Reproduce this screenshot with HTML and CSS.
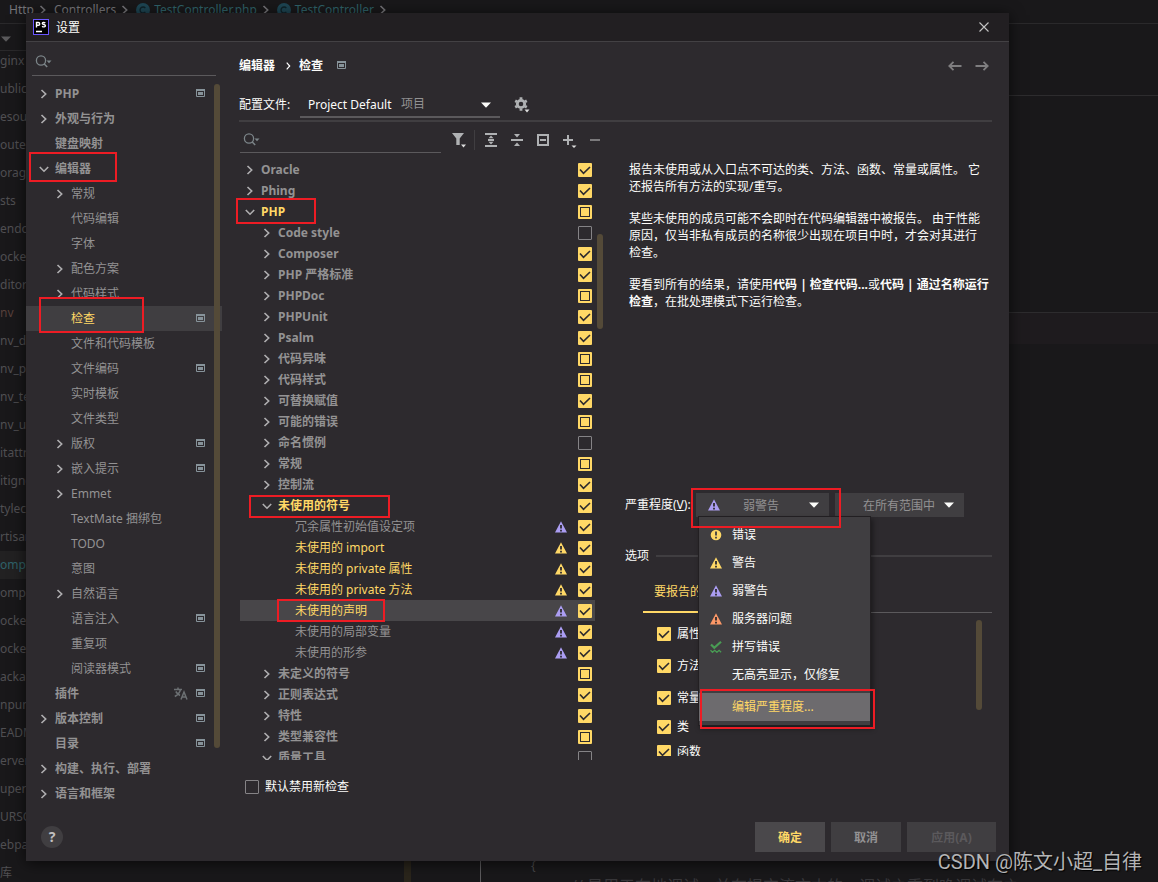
FILE: index.html
```html
<!DOCTYPE html>
<html lang="zh-CN">
<head>
<meta charset="utf-8">
<title>设置</title>
<link rel="stylesheet" href="styles.css">
</head>
<body>
<svg class="defs" aria-hidden="true">
  <symbol id="right" viewBox="0 0 10 10"><path d="M2.5 1 6.7 5 2.5 9" fill="none" stroke="currentColor" stroke-width="1.6"/></symbol>
  <symbol id="down" viewBox="0 0 10 10"><path d="M.8 3 5 7.2 9.2 3" fill="none" stroke="currentColor" stroke-width="1.6"/></symbol>
  <symbol id="proj" viewBox="0 0 9 9"><path d="M.5.5h8v7h-8z" fill="none" stroke="#87939a"/><path d="M0 0h9v2H0zM2 3h5v3H2z" fill="#87939a"/></symbol>
  <symbol id="tri" viewBox="0 0 12 12"><path d="M6 .3 12 11.5H0z" fill="currentColor"/><path d="M5.1 4h1.8v3.6H5.1zM5.1 8.7h1.8v1.7H5.1z" fill="#2d2a2e"/></symbol>
  <symbol id="find" viewBox="0 0 18 14"><circle cx="6" cy="5.5" r="4.6" fill="none" stroke="#7c8589" stroke-width="1.3"/><path d="m9.2 9 3 3" stroke="#7c8589" stroke-width="1.5"/><path d="M11.5 5.5h5L14 8.3z" fill="#7c8589"/></symbol>
  <symbol id="caret" viewBox="0 0 10 6"><path d="M0 .5h10L5 5.7z" fill="currentColor"/></symbol>
  <symbol id="cls" viewBox="0 0 14 14"><circle cx="7" cy="7" r="7" fill="#1e4654"/><path d="M9.3 5A3 3 0 1 0 9.3 9" fill="none" stroke="#0f2229" stroke-width="1.3"/></symbol>
</svg>

<div class="ide">
  <header class="path">
    <span>Http</span><svg class="i10"><use href="#right"/></svg>
    <span>Controllers</span><svg class="i10"><use href="#right"/></svg>
    <svg class="i14"><use href="#cls"/></svg><span class="teal">TestController.php</span><svg class="i10"><use href="#right"/></svg>
    <svg class="i14"><use href="#cls"/></svg><span class="teal">TestController</span><svg class="i10"><use href="#right"/></svg>
  </header>
  <div class="work">
    <aside class="files">
      <div class="files-bar"><svg class="caret"><use href="#caret"/></svg></div>
      <ul>
        <li>ginx</li><li>ublic</li><li>esources</li><li>outes</li><li>orage</li><li>sts</li><li>endor</li><li>ockerignore</li><li>ditorconfig</li><li class="rust">nv</li><li>nv_dev</li><li>nv_prod</li><li>nv_test</li><li>nv_uat</li><li>itattributes</li><li>itignore</li><li>tyleci.yml</li><li>rtisan</li><li class="open">omposer.json</li><li>omposer.lock</li><li>ocker-compose</li><li>ockerfile</li><li>ackage.json</li><li>npunit.xml</li><li>EADME.md</li><li>erver.php</li><li>upervisor</li><li>URSOR</li><li>ebpack.mix.js</li><li>库</li>
      </ul>
    </aside>
    <main class="code">
      <div class="pane tabs-pane"></div>
      <div class="pane code-pane"></div>
      <div class="line-hl"></div>
      <div class="code-tail"><span class="brace">{</span><span class="comment">// 是用于在地调试，并在提交流文本的一调试之重到晚调试在之</span></div>
    </main>
  </div>
</div>

<section class="dialog" role="dialog" aria-labelledby="title">
  <header class="titlebar">
    <svg class="logo" viewBox="0 0 16 16"><rect x=".5" y=".5" width="15" height="15" fill="#000" stroke="#6b57ff"/><path d="M3.5 8.500V3.500h1.800a1.400 1.400 0 0 1 0 2.800H3.500M12.300 4c-1-.9-3-.7-3 .5 0 1.400 3.100.700 3.100 2.200 0 1.500-2.200 1.500-3.300.500M3 12.500h6" fill="none" stroke="#fff" stroke-width="1.400"/></svg>
    <h1 id="title">设置</h1>
    <button class="close" aria-label="关闭"><svg viewBox="0 0 10 10"><path d="m.5.5 9 9m0-9-9 9" stroke="#c4c4c4" stroke-width="1.100"/></svg></button>
  </header>

  <div class="body">
    <nav class="side">
      <label class="search"><svg><use href="#find"/></svg><input type="text" aria-label="搜索设置"></label>
      <ul class="cats">
        <li class="top"><svg class="i10"><use href="#right"/></svg><a href="#">PHP</a><svg class="proj"><use href="#proj"/></svg></li>
        <li class="top"><svg class="i10"><use href="#right"/></svg><a href="#">外观与行为</a></li>
        <li class="top leaf"><a href="#">键盘映射</a></li>
        <li class="top"><svg class="i10"><use href="#down"/></svg><a href="#">编辑器</a><i class="mark m-editor"></i></li>
        <li><svg class="i10"><use href="#right"/></svg><a href="#">常规</a></li>
        <li class="leaf"><a href="#">代码编辑</a></li>
        <li class="leaf"><a href="#">字体</a></li>
        <li><svg class="i10"><use href="#right"/></svg><a href="#">配色方案</a></li>
        <li><svg class="i10"><use href="#right"/></svg><a href="#">代码样式</a></li>
        <li class="leaf current"><a href="#">检查</a><svg class="proj"><use href="#proj"/></svg><i class="mark m-inspect"></i></li>
        <li class="leaf"><a href="#">文件和代码模板</a></li>
        <li class="leaf"><a href="#">文件编码</a><svg class="proj"><use href="#proj"/></svg></li>
        <li class="leaf"><a href="#">实时模板</a></li>
        <li class="leaf"><a href="#">文件类型</a></li>
        <li><svg class="i10"><use href="#right"/></svg><a href="#">版权</a><svg class="proj"><use href="#proj"/></svg></li>
        <li><svg class="i10"><use href="#right"/></svg><a href="#">嵌入提示</a><svg class="proj"><use href="#proj"/></svg></li>
        <li><svg class="i10"><use href="#right"/></svg><a href="#">Emmet</a></li>
        <li class="leaf"><a href="#">TextMate 捆绑包</a></li>
        <li class="leaf"><a href="#">TODO</a></li>
        <li class="leaf"><a href="#">意图</a></li>
        <li><svg class="i10"><use href="#right"/></svg><a href="#">自然语言</a></li>
        <li class="leaf"><a href="#">语言注入</a><svg class="proj"><use href="#proj"/></svg></li>
        <li class="leaf"><a href="#">重复项</a></li>
        <li class="leaf"><a href="#">阅读器模式</a><svg class="proj"><use href="#proj"/></svg></li>
        <li class="top leaf"><a href="#">插件</a><svg class="lang" viewBox="0 0 14 13"><path d="M0 2.500h8M4 .5v2M6.500 2.500C5.800 5.500 3.500 8 .8 9.500M1.800 4.500C3 6.500 4.500 7.700 6 8.500M7 12.500l3-7.500 3 7.500M8 10h4" fill="none" stroke="#6c7073" stroke-width="1.500"/></svg><svg class="proj"><use href="#proj"/></svg></li>
        <li class="top"><svg class="i10"><use href="#right"/></svg><a href="#">版本控制</a><svg class="proj"><use href="#proj"/></svg></li>
        <li class="top leaf"><a href="#">目录</a><svg class="proj"><use href="#proj"/></svg></li>
        <li class="top"><svg class="i10"><use href="#right"/></svg><a href="#">构建、执行、部署</a></li>
        <li class="top"><svg class="i10"><use href="#right"/></svg><a href="#">语言和框架</a></li>
      </ul>
      <span class="thumb side-thumb"></span>
    </nav>

    <div class="main">
      <div class="crumbs">
        <b>编辑器</b><svg class="sep" viewBox="0 0 5 8"><path d="m.7.7 3 3.300-3 3.300" fill="none" stroke="#fff" stroke-width="1.200"/></svg><b>检查</b><svg class="proj"><use href="#proj"/></svg>
        <span class="nav">
          <button aria-label="后退"><svg viewBox="0 0 14 10"><path d="M13.500 5H1.500M5.500.8 1.300 5l4.200 4.200" fill="none" stroke="currentColor" stroke-width="1.800"/></svg></button>
          <button aria-label="前进"><svg viewBox="0 0 14 10"><path d="M.5 5h12M8.500.8 12.700 5 8.500 9.200" fill="none" stroke="currentColor" stroke-width="1.800"/></svg></button>
        </span>
      </div>

      <div class="profile">
        <label for="profile">配置文件:</label>
        <span class="combo">
          <select id="profile"><option>Project Default</option></select>
          <span class="tag">项目</span><svg class="caret"><use href="#caret"/></svg>
        </span>
        <button class="gear" aria-label="配置文件操作"><svg viewBox="0 0 16 16"><g fill="none" stroke="#afb1b3"><circle cx="7" cy="7" r="3.700" stroke-width="2.800"/><path d="M7 .3v2M7 11.700v2M1.200 3.700 3 4.700M11 9.300l1.800 1M1.200 10.300 3 9.300M11 4.700l1.800-1" stroke-width="2.800"/></g><path d="M9 12h7l-3.500 4z" fill="#2d2a2e"/><path d="M10.500 12.500h5L13 15.500z" fill="#ddd"/></svg></button>
      </div>

      <div class="cols">
        <div class="insp">
          <div class="tools">
            <label class="search"><svg><use href="#find"/></svg><input type="text" aria-label="搜索检查"></label>
            <button class="filter" aria-label="筛选"><svg viewBox="0 0 16 16"><path d="M1 1h12L8.700 6.500V13H5.300V6.500z" fill="#afb1b3"/><path d="M10 12.500h5l-2.500 3z" fill="#ddd"/></svg></button>
            <span class="vr"></span>
            <button aria-label="全部展开"><svg viewBox="0 0 16 16"><path d="M2 2h12M2 14h12M5 8h6" stroke="#afb1b3" stroke-width="2"/><path d="M8 3.500 10.500 6.300h-5zM8 12.500l2.500-2.800h-5z" fill="#afb1b3"/></svg></button>
            <button aria-label="全部折叠"><svg viewBox="0 0 16 16"><path d="M2 8h12" stroke="#afb1b3" stroke-width="2"/><path d="M8 5.500 11 2H5zM8 10.500 11 14H5z" fill="#afb1b3"/></svg></button>
            <button aria-label="重置为空"><svg viewBox="0 0 16 16"><path d="M3 3h10v10H3zM5 8h6" fill="none" stroke="#afb1b3" stroke-width="2"/></svg></button>
            <button aria-label="添加"><svg viewBox="0 0 16 16"><path d="M7 3v10M2 8h10" stroke="#afb1b3" stroke-width="2"/><path d="M10.500 13.500h5L13 16z" fill="#ddd"/></svg></button>
            <button aria-label="移除"><svg viewBox="0 0 16 16"><path d="M3 8h10" stroke="#7b7a7c" stroke-width="2"/></svg></button>
          </div>

          <ul class="tree">
            <li class="d0"><svg class="i10"><use href="#right"/></svg><label for="c1">Oracle</label><input type="checkbox" id="c1" checked></li>
            <li class="d0"><svg class="i10"><use href="#right"/></svg><label for="c2">Phing</label><input type="checkbox" id="c2" checked></li>
            <li class="d0 hot"><svg class="i10"><use href="#down"/></svg><label for="c3">PHP</label><input type="checkbox" id="c3" class="mixed"><i class="mark m-php"></i></li>
            <li><svg class="i10"><use href="#right"/></svg><label for="c4">Code style</label><input type="checkbox" id="c4"></li>
            <li><svg class="i10"><use href="#right"/></svg><label for="c5">Composer</label><input type="checkbox" id="c5" checked></li>
            <li><svg class="i10"><use href="#right"/></svg><label for="c6">PHP 严格标准</label><input type="checkbox" id="c6" checked></li>
            <li><svg class="i10"><use href="#right"/></svg><label for="c7">PHPDoc</label><input type="checkbox" id="c7" class="mixed"></li>
            <li><svg class="i10"><use href="#right"/></svg><label for="c8">PHPUnit</label><input type="checkbox" id="c8" checked></li>
            <li><svg class="i10"><use href="#right"/></svg><label for="c9">Psalm</label><input type="checkbox" id="c9" checked></li>
            <li><svg class="i10"><use href="#right"/></svg><label for="c10">代码异味</label><input type="checkbox" id="c10" class="mixed"></li>
            <li><svg class="i10"><use href="#right"/></svg><label for="c11">代码样式</label><input type="checkbox" id="c11" class="mixed"></li>
            <li><svg class="i10"><use href="#right"/></svg><label for="c12">可替换赋值</label><input type="checkbox" id="c12" checked></li>
            <li><svg class="i10"><use href="#right"/></svg><label for="c13">可能的错误</label><input type="checkbox" id="c13" class="mixed"></li>
            <li><svg class="i10"><use href="#right"/></svg><label for="c14">命名惯例</label><input type="checkbox" id="c14"></li>
            <li><svg class="i10"><use href="#right"/></svg><label for="c15">常规</label><input type="checkbox" id="c15" class="mixed"></li>
            <li><svg class="i10"><use href="#right"/></svg><label for="c16">控制流</label><input type="checkbox" id="c16" checked></li>
            <li class="hot"><svg class="i10"><use href="#down"/></svg><label for="c17">未使用的符号</label><input type="checkbox" id="c17" checked><i class="mark m-symbols"></i></li>
            <li class="d2"><label for="c18">冗余属性初始值设定项</label><svg class="sev weak"><use href="#tri"/></svg><input type="checkbox" id="c18" checked></li>
            <li class="d2 hot"><label for="c19">未使用的 import</label><svg class="sev warn"><use href="#tri"/></svg><input type="checkbox" id="c19" checked></li>
            <li class="d2 hot"><label for="c20">未使用的 private 属性</label><svg class="sev warn"><use href="#tri"/></svg><input type="checkbox" id="c20" checked></li>
            <li class="d2 hot"><label for="c21">未使用的 private 方法</label><svg class="sev warn"><use href="#tri"/></svg><input type="checkbox" id="c21" checked></li>
            <li class="d2 hot current"><label for="c22">未使用的声明</label><svg class="sev weak"><use href="#tri"/></svg><input type="checkbox" id="c22" checked><i class="mark m-decl"></i></li>
            <li class="d2"><label for="c23">未使用的局部变量</label><svg class="sev weak"><use href="#tri"/></svg><input type="checkbox" id="c23" checked></li>
            <li class="d2"><label for="c24">未使用的形参</label><svg class="sev weak"><use href="#tri"/></svg><input type="checkbox" id="c24" checked></li>
            <li><svg class="i10"><use href="#right"/></svg><label for="c25">未定义的符号</label><input type="checkbox" id="c25" class="mixed"></li>
            <li><svg class="i10"><use href="#right"/></svg><label for="c26">正则表达式</label><input type="checkbox" id="c26" checked></li>
            <li><svg class="i10"><use href="#right"/></svg><label for="c27">特性</label><input type="checkbox" id="c27" checked></li>
            <li><svg class="i10"><use href="#right"/></svg><label for="c28">类型兼容性</label><input type="checkbox" id="c28" class="mixed"></li>
            <li><svg class="i10"><use href="#down"/></svg><label for="c29">质量工具</label><input type="checkbox" id="c29"></li>
          </ul>
          <span class="thumb tree-thumb"></span>
          <div class="disable-new"><input type="checkbox" id="newoff"><label for="newoff">默认禁用新检查</label></div>
        </div>

        <div class="detail">
          <div class="desc">
            <p>报告未使用或从入口点不可达的类、方法、函数、常量或属性。 它还报告所有方法的实现/重写。</p>
            <p>某些未使用的成员可能不会即时在代码编辑器中被报告。 由于性能原因，仅当非私有成员的名称很少出现在项目中时，才会对其进行<span class="keep">检查。</span></p>
            <p>要看到所有的结果，请使用<b>代码 | 检查代码...</b>或<b>代码 | 通过名称运行检查</b>，在批处理模式下运行检查。</p>
          </div>

          <div class="severity">
            <label for="sev">严重程度(<u>V</u>):</label>
            <div class="pick sev-pick">
              <svg class="sev weak"><use href="#tri"/></svg>
              <select id="sev"><option>弱警告</option></select>
              <svg class="caret"><use href="#caret"/></svg>
              <ul class="menu">
                <li><button><svg viewBox="0 0 12 12"><circle cx="6" cy="6" r="5.300" fill="#ffd866"/><path d="M5.100 2.500h1.800v4H5.100zM5.100 7.700h1.800v1.800H5.100z" fill="#403e41"/></svg>错误</button></li>
                <li><button><svg class="warn"><use href="#tri"/></svg>警告</button></li>
                <li><button><svg class="weak"><use href="#tri"/></svg>弱警告</button></li>
                <li><button><svg class="server"><use href="#tri"/></svg>服务器问题</button></li>
                <li><button><svg viewBox="0 0 12 12"><path d="m1 3.500 3.300 3.300L11 .8" fill="none" stroke="#499c54" stroke-width="2.200"/><path d="m.5 9.300 2 2 2.200-2 2.200 2 2.200-2 2 2" fill="none" stroke="#499c54" stroke-width="1.300"/></svg>拼写错误</button></li>
                <li><button><svg></svg>无高亮显示，仅修复</button></li>
                <li class="edit"><button><svg></svg>编辑严重程度...</button><i class="mark m-edit"></i></li>
              </ul>
              <i class="mark m-sev"></i>
            </div>
            <div class="pick scope-pick">
              <select aria-label="范围"><option>在所有范围中</option></select>
              <svg class="caret"><use href="#caret"/></svg>
            </div>
          </div>

          <h2 class="options">选项</h2>
          <div class="tabs"><button>要报告的</button></div>
          <ul class="members">
            <li><input type="checkbox" id="m1" checked><label for="m1">属性</label></li>
            <li><input type="checkbox" id="m2" checked><label for="m2">方法</label></li>
            <li><input type="checkbox" id="m3" checked><label for="m3">常量</label></li>
            <li class="tight"><input type="checkbox" id="m4" checked><label for="m4">类</label></li>
            <li class="tight"><input type="checkbox" id="m5" checked><label for="m5">函数</label></li>
          </ul>
          <span class="thumb detail-thumb"></span>
        </div>
      </div>
    </div>
  </div>

  <footer class="actions">
    <button class="help" aria-label="帮助">?</button>
    <button class="ok">确定</button>
    <button>取消</button>
    <button class="apply" disabled>应用(A)</button>
  </footer>
</section>
<div class="watermark">CSDN @陈文小超_自律</div>
</body>
</html>
```
FILE: styles.css
```css
* { box-sizing: border-box; }
body {
  margin: 0;
  height: 100vh;
  overflow: hidden;
  position: relative;
  background: #19181a;
  color: #fcfcfa;
  font: 12px/16px "Noto Sans", "Noto Sans CJK SC", sans-serif;
}
ul { list-style: none; margin: 0; padding: 0; }
a { color: inherit; text-decoration: none; }
button, input, select { font: inherit; color: inherit; }
button { border: 0; padding: 0; background: none; }
svg { display: block; flex: none; }
.defs { position: absolute; width: 0; height: 0; }
.i10 { width: 10px; height: 10px; }
.i14 { width: 14px; height: 14px; }
.caret { width: 10px; height: 6px; }
.proj { width: 9px; height: 9px; }
.weak { color: #ab9df2; }
.warn { color: #ffd866; }
.server { color: #fc9867; }
.keep { white-space: nowrap; }

/* Editor window behind the dialog */
.ide { height: 100%; display: flex; flex-direction: column; }
.path {
  height: 24px;
  padding: 0 9px 4px;
  display: flex;
  align-items: center;
  gap: 7px;
  color: #77767a;
  border-bottom: 1px solid #2a292b;
}
.path .i10 { margin: 0 -1px 0 -3px; }
.path .i14 { margin-right: -3px; }
.teal { color: #2f6269; }
.work { flex: 1; display: flex; min-height: 0; }
.files { width: 411px; border-right: 7px solid #2a251b; overflow: hidden; color: #504f52; }
.files-bar { height: 27px; padding: 12px 1px; border-bottom: 1px solid #2a292b; color: #5b5a5c; }
.files ul { margin-top: -4px; }
.files li { height: 28px; line-height: 28px; white-space: nowrap; }
.files .rust { color: #58403a; }
.files .open { background: #222122; color: #2f6269; }
.code { flex: 1; display: flex; flex-direction: column; }
.tabs-pane { height: 72px; border-bottom: 1px solid #2d2c2e; }
.code-pane { height: 217px; border-bottom: 1px solid #2d2c2e; }
.line-hl { height: 31px; background: #1e1b1e; }
.code-tail { flex: 1; margin-left: 69px; border-left: 1px solid #5c5b5d; display: flex; flex-direction: column; justify-content: flex-end; color: #4a494b; overflow: hidden; }
.brace { padding-left: 50px; line-height: 20px; }
.comment { height: 6px; padding-left: 90px; font-size: 16px; line-height: 20px; white-space: nowrap; overflow: hidden; color: #38373a; }

/* Dialog */
.dialog {
  position: absolute;
  inset: 13px 149px 21px 26px;
  display: flex;
  flex-direction: column;
  background: #2d2a2e;
  box-shadow: 0 2px 14px #000a;
}
.titlebar {
  height: 29px;
  padding: 0 20px 0 7px;
  display: flex;
  align-items: center;
  gap: 7px;
  background: #221f22;
  border-bottom: 1px solid #434144;
}
.titlebar h1 { margin: 0; font-size: 12px; font-weight: 400; line-height: 18px; padding-top: 2px; }
.logo { width: 16px; height: 16px; }
.close { margin-left: auto; }
.close svg { width: 10px; height: 10px; }
.body { flex: 1; display: flex; min-height: 0; }

.search { display: flex; align-items: center; gap: 4px; border-bottom: 1px solid #5b595c; padding-left: 3px; }
.search svg { width: 18px; height: 14px; }
.search input { flex: 1; min-width: 0; border: 0; padding: 0; background: none; outline: 0; }

.thumb { position: absolute; width: 6px; border-radius: 3px; background: #544a38; }

/* Category list */
.side { position: relative; width: 196px; color: #939293; }
.side .search { height: 34px; padding-top: 6px; margin: 0 6px; }
.cats { padding-top: 5px; }
.cats li { position: relative; height: 25px; padding: 0 17px 0 29px; display: flex; align-items: center; gap: 6px; white-space: nowrap; }
.cats .top { padding-left: 13px; font-weight: 700; }
.cats .leaf { padding-left: 45px; }
.cats .top.leaf { padding-left: 29px; }
.cats .proj { margin-left: auto; }
.cats .lang { width: 14px; height: 13px; margin-left: auto; }
.cats .lang + .proj { margin-left: 2px; }
.cats .i10, .tree .i10 { color: #b0afb1; }
.cats .current { background: #403e41; color: #ffd866; }
.side-thumb { right: 2px; top: 42px; height: 664px; }

/* Red call-out frames */
.mark { position: absolute; border: 2px solid #ed1c24; z-index: 3; pointer-events: none; }
.m-editor { left: 3px; top: -4px; width: 88px; height: 30px; }
.m-inspect { left: 13px; top: -9px; width: 105px; height: 36px; }
.m-php { left: -4px; top: -3px; width: 80px; height: 26px; }
.m-symbols { left: 9px; top: 0; width: 141px; height: 23px; }
.m-decl { left: 37px; top: -1px; width: 108px; height: 23px; }
.m-sev { left: -5px; top: -5px; width: 150px; height: 40px; }
.m-edit { left: 1px; top: -4px; width: 175px; height: 40px; }

/* Right side */
.main { flex: 1; min-width: 0; padding: 0 17px; display: flex; flex-direction: column; }
.crumbs { height: 44px; padding-top: 3px; display: flex; align-items: center; }
.crumbs .sep { width: 5px; height: 8px; margin: 0 8px 0 11px; }
.crumbs .proj { margin-left: 14px; }
.nav { margin-left: auto; display: flex; gap: 13px; color: #7f7e80; padding-right: 3px; }
.nav svg { width: 14px; height: 10px; }
.profile { display: flex; align-items: center; padding: 6px 0 2px; border-bottom: 2px solid #403e41; }
.profile label { width: 61px; white-space: nowrap; }
.combo { position: relative; width: 200px; height: 26px; border-bottom: 2px solid #5b595c; }
select { appearance: none; border: 0; background: none; outline: 0; }
.combo select { width: 100%; height: 24px; padding: 1px 0 0 8px; }
.combo .tag { position: absolute; left: 101px; top: 4px; color: #939293; }
.combo .caret { position: absolute; right: 9px; top: 10px; }
.gear { margin-left: 14px; }
.gear svg { width: 16px; height: 16px; }

.cols { flex: 1; display: flex; min-height: 0; gap: 22px; }
.insp { position: relative; width: 364px; display: flex; flex-direction: column; }
.tools { display: flex; align-items: center; gap: 10px; padding: 5px 0 6px 1px; }
.tools .search { width: 201px; height: 26px; }
.tools button svg { width: 16px; height: 16px; }
.filter { margin-right: -3px; }
.vr { width: 1px; height: 20px; background: #403e41; margin-right: -2px; }
.tree { flex: 1; min-height: 0; overflow: hidden; margin-left: -5px; padding-left: 6px; color: #939293; }
.tree li { position: relative; height: 21px; width: 355px; padding: 0 3px 0 22px; display: flex; align-items: center; gap: 6px; font-weight: 700; white-space: nowrap; }
.tree .d0 { padding-left: 5px; }
.tree .d2 { padding-left: 55px; font-weight: 400; }
.tree .hot { color: #ffd866; }
.tree .current { background: #484649; }
.tree label { margin-right: auto; }
.tree .sev + input { margin-left: 5px; }
.sev { width: 12px; height: 12px; }
.tree-thumb { right: 0; top: 112px; height: 95px; }
.disable-new { height: 53px; padding-left: 6px; display: flex; align-items: center; gap: 6px; }

input[type="checkbox"] {
  appearance: none;
  flex: none;
  position: relative;
  width: 14px;
  height: 14px;
  margin: 0;
  border: 1px solid #858386;
  border-radius: 1px;
}
input[type="checkbox"]:checked {
  border: 0;
  background: #ffd866 url("data:image/svg+xml,%3Csvg xmlns='http://www.w3.org/2000/svg' viewBox='0 0 14 14'%3E%3Cpath d='M2 6.500 5.500 10.300 12 4' fill='none' stroke='%232d2a2e' stroke-width='1.600'/%3E%3C/svg%3E");
}
input[type="checkbox"].mixed { border: 2px solid #ffd866; }
input[type="checkbox"].mixed::before { content: ""; position: absolute; inset: 1px; background: #ffd866; }

/* Inspection details */
.detail { position: relative; flex: 1; min-width: 0; display: flex; flex-direction: column; padding-bottom: 57px; }
.desc { flex: 1; padding: 39px 2px 0 4px; line-height: 17px; }
.desc p { margin: 0 0 15px; }
.severity { display: flex; height: 24px; align-items: center; }
.severity label { width: 71px; white-space: nowrap; }
.pick { position: relative; height: 24px; display: flex; align-items: center; background: #403e41; color: #939293; }
.pick > .caret { position: absolute; right: 10px; color: #fcfcfa; pointer-events: none; }
.pick select { width: 100%; height: 24px; padding: 1px 0 0; }
.sev-pick { width: 133px; }
.sev-pick > .sev { position: absolute; left: 12px; }
.sev-pick select { padding-left: 47px; }
.scope-pick { width: 129px; margin-left: 6px; }
.scope-pick select { padding-left: 28px; }
.menu {
  position: absolute;
  left: 2px;
  top: 23px;
  width: 173px;
  padding: 4px 0;
  z-index: 2;
  background: #403e41;
  border: 1px solid #221f22;
  box-shadow: 2px 3px 5px #0006;
  color: #fcfcfa;
}
.menu li { position: relative; }
.menu button { width: 100%; height: 28px; padding-left: 11px; display: flex; align-items: center; gap: 10px; }
.menu svg { width: 12px; height: 12px; }
.menu .edit { margin-top: 4px; background: #6d6b6e; color: #ffd866; }

.options { margin: 30px 0 0; height: 18px; display: flex; align-items: center; gap: 7px; font-size: 12px; font-weight: 400; }
.options::after { content: ""; flex: 1; height: 2px; background: #403e41; }
.tabs { margin: 8px 0 0 18px; height: 40px; border-bottom: 1px solid #5b595c; display: flex; }
.tabs button { height: 40px; padding: 0 11px; color: #ffd866; border-bottom: 2px solid #ffd866; }
.members { height: 143px; padding: 5px 0 0 32px; overflow: hidden; }
.members li { height: 32px; display: flex; align-items: center; gap: 6px; }
.members .tight { height: 25px; }
.detail-thumb { right: 10px; bottom: 103px; height: 90px; }

.actions { height: 48px; padding: 0 13px 0 15px; display: flex; align-items: center; gap: 6px; }
.actions button { width: 70px; height: 30px; padding-top: 1px; background: #403e41; color: #939293; font-weight: 700; }
.actions .ok { background: #4a484b; color: #ffd866; }
.actions .apply { width: 89px; color: #5b595c; }
.actions .help { width: 22px; height: 22px; padding: 0; margin-right: auto; border-radius: 50%; font-size: 14px; color: #c1c0c0; }
.watermark { position: absolute; right: 16px; bottom: 8px; font: 20px/24px Roboto, "Noto Sans CJK SC", sans-serif; color: #b4b4b5; text-shadow: 1px 1px 1px #000; }
```
